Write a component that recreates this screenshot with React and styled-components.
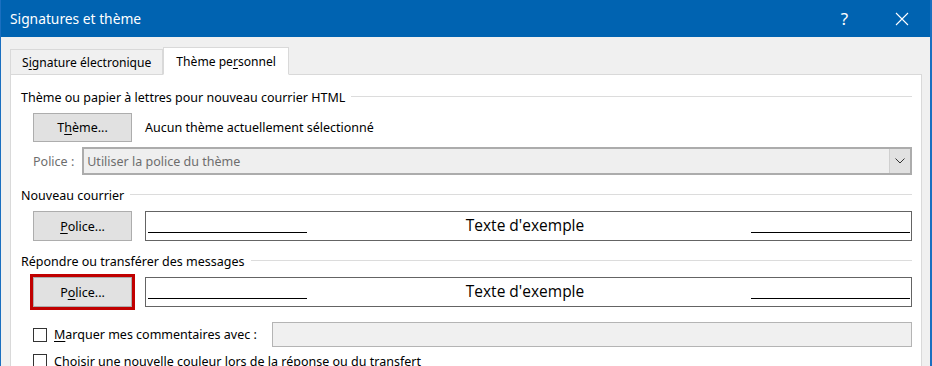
import React from 'react';
import styled, { createGlobalStyle } from 'styled-components';

const GlobalStyle = createGlobalStyle`
  html, body {
    margin: 0;
    padding: 0;
    background: #f0f0f0;
  }
  body {
    font-family: "Noto Sans", "Open Sans", sans-serif;
    font-size: 12.5px;
    color: #000;
  }
`;

const Window = styled.div`
  width: 932px;
  height: 366px;
  box-sizing: border-box;
  overflow: hidden;
  background: #f0f0f0;
  border-left: 1px solid #1a6fc0;
  border-right: 2px solid #1a6fc0;
  display: flex;
  flex-direction: column;
`;

const TitleBar = styled.div`
  height: 37px;
  flex: none;
  background: #0063b1;
  color: #fff;
  display: flex;
  align-items: center;
  padding-left: 9px;
  font-size: 13.8px;
`;

const Title = styled.span`
  flex: 1;
`;

const TitleButton = styled.div`
  width: 57px;
  display: flex;
  justify-content: center;
  align-items: center;
  font-size: 17px;
`;

const Body = styled.div`
  flex: 1;
  padding: 10px 8px 0 9px;
  display: flex;
  flex-direction: column;
`;

const TabRow = styled.div`
  display: flex;
  align-items: flex-end;
  height: 28px;
  position: relative;
  z-index: 1;
`;

const Tab = styled.div`
  box-sizing: border-box;
  height: ${(p) => (p.$active ? '28px' : '26px')};
  padding: 0 ${(p) => (p.$active ? '12px' : '11px')};
  display: flex;
  align-items: center;
  font-size: 12.1px;
  background: ${(p) => (p.$active ? '#fff' : '#f0f0f0')};
  border: 1px solid #d9d9d9;
  border-bottom: ${(p) => (p.$active ? '1px solid #fff' : '1px solid #d9d9d9')};
`;

const Panel = styled.div`
  flex: 1;
  margin-top: -1px;
  background: #fff;
  border: 1px solid #d9d9d9;
  border-bottom: none;
  padding: 14px 9px 0 10px;
  display: flex;
  flex-direction: column;
`;

const Heading = styled.div`
  display: flex;
  align-items: center;
  height: 16px;
  gap: 6px;
  margin-top: ${(p) => p.$top || 0}px;

  &::after {
    content: '';
    flex: 1;
    height: 1px;
    background: #dcdcdc;
    margin-top: -2px;
  }
`;

const Row = styled.div`
  display: flex;
  align-items: center;
  padding-left: 12px;
  gap: ${(p) => p.$gap ?? 13}px;
  margin-top: ${(p) => p.$top || 0}px;
  height: ${(p) => p.$h}px;
`;

const Button = styled.div`
  box-sizing: border-box;
  width: 99px;
  height: ${(p) => p.$h || 30}px;
  flex: none;
  background: #e1e1e1;
  border: 1px solid #adadad;
  display: flex;
  align-items: center;
  justify-content: center;
  outline: ${(p) => (p.$flagged ? '3px solid #c00000' : 'none')};
`;

const U = styled.span`
  text-decoration: underline;
  text-underline-offset: 2px;
`;

const Label = styled.span`
  color: ${(p) => (p.$disabled ? '#6d6d6d' : '#000')};
  white-space: nowrap;
`;

const Select = styled.div`
  box-sizing: border-box;
  flex: 1;
  height: 28px;
  margin-left: 8px;
  background: #efefef;
  border: 2px solid #acacac;
  display: flex;
  align-items: stretch;
`;

const SelectValue = styled.div`
  flex: 1;
  display: flex;
  align-items: center;
  padding-left: 3px;
  color: #6d6d6d;
`;

const SelectArrow = styled.div`
  width: 20px;
  background: #e1e1e1;
  border-left: 1px solid #cfcfcf;
  display: flex;
  align-items: center;
  justify-content: center;
`;

const Preview = styled.div`
  box-sizing: border-box;
  flex: 1;
  height: 30px;
  border: 1px solid #646464;
  display: flex;
  align-items: center;
  justify-content: space-between;
  padding: 0 1px 0 2px;
`;

const Rule = styled.div`
  width: 159px;
  height: 1px;
  background: #000;
  margin-top: 12px;
`;

const Sample = styled.span`
  font-family: "Open Sans", "Noto Sans", sans-serif;
  font-size: 15.5px;
  margin: -2px 8px 0 0;
`;

const CheckRow = styled.label`
  display: flex;
  align-items: center;
  padding-left: 12px;
  height: ${(p) => p.$h || 25}px;
  margin-top: ${(p) => p.$top || 0}px;
`;

const Box = styled.span`
  box-sizing: border-box;
  width: 14px;
  height: 14px;
  flex: none;
  border: 1px solid #333;
  background: #fff;
  margin-right: 7px;
`;

const TextInput = styled.div`
  box-sizing: border-box;
  flex: 1;
  height: 25px;
  margin-left: 15px;
  background: #f0f0f0;
  border: 1px solid #b4b4b4;
`;

const Chevron = () => (
  <svg width="10" height="6" viewBox="0 0 10 6">
    <path d="M0.5 0.5 L5 5 L9.5 0.5" fill="none" stroke="#333" strokeWidth="1" />
  </svg>
);

const CloseIcon = () => (
  <svg width="14" height="14" viewBox="0 0 14 14">
    <path d="M1 1 L13 13 M13 1 L1 13" stroke="#fff" strokeWidth="1.1" />
  </svg>
);

export default function App() {
  return (
    <>
      <GlobalStyle />
      <Window>
        <TitleBar>
          <Title>Signatures et thème</Title>
          <TitleButton>?</TitleButton>
          <TitleButton>
            <CloseIcon />
          </TitleButton>
        </TitleBar>
        <Body>
          <TabRow>
            <Tab>
              S<U>i</U>gnature électronique
            </Tab>
            <Tab $active>
              Thème pe<U>r</U>sonnel
            </Tab>
          </TabRow>
          <Panel>
            <Heading>Thème ou papier à lettres pour nouveau courrier HTML</Heading>
            <Row $top={8} $h={29}>
              <Button $h={29}>
                T<U>h</U>ème...
              </Button>
              <Label>Aucun thème actuellement sélectionné</Label>
            </Row>
            <Row $top={5} $h={28} $gap={0}>
              <Label $disabled>Police :</Label>
              <Select>
                <SelectValue>Utiliser la police du thème</SelectValue>
                <SelectArrow>
                  <Chevron />
                </SelectArrow>
              </Select>
            </Row>
            <Heading $top={12}>Nouveau courrier</Heading>
            <Row $top={8} $h={30}>
              <Button>
                <U>P</U>olice...
              </Button>
              <Preview>
                <Rule />
                <Sample>Texte d'exemple</Sample>
                <Rule />
              </Preview>
            </Row>
            <Heading $top={12}>Répondre ou transférer des messages</Heading>
            <Row $top={8} $h={30}>
              <Button $flagged>
                P<U>o</U>lice...
              </Button>
              <Preview>
                <Rule />
                <Sample>Texte d'exemple</Sample>
                <Rule />
              </Preview>
            </Row>
            <CheckRow $top={15}>
              <Box />
              <Label>
                <U>M</U>arquer mes commentaires avec :
              </Label>
              <TextInput />
            </CheckRow>
            <CheckRow $top={4} $h={20}>
              <Box />
              <Label>
                Choisir une nouvelle couleur lors de la réponse ou du transfert
              </Label>
            </CheckRow>
          </Panel>
        </Body>
      </Window>
    </>
  );
}
